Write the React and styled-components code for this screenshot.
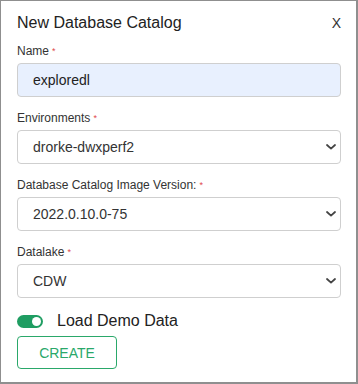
import React, { useState } from 'react';
import styled, { createGlobalStyle } from 'styled-components';

const GlobalStyle = createGlobalStyle`
  html, body { margin: 0; padding: 0; background: #fff; }
  body { font-family: "Liberation Sans", Arial, sans-serif; }
`;

const Dialog = styled.div`
  box-sizing: border-box;
  width: 358px;
  height: 384px;
  background: #fff;
  border-top: 1px solid #8f8f8f;
  border-left: 1px solid #8f8f8f;
  border-right: 2px solid #8f8f8f;
  border-bottom: 2px solid #8f8f8f;
  padding: 12px 15px 0 16px;
  display: flex;
  flex-direction: column;
`;

const Header = styled.div`
  display: flex;
  align-items: center;
  justify-content: space-between;
  height: 20px;
  margin-bottom: 10px;
`;

const Title = styled.div`
  font-size: 16px;
  line-height: 20px;
  color: #222;
`;

const Close = styled.button`
  border: none;
  background: none;
  padding: 0;
  font-family: "Liberation Sans", Arial, sans-serif;
  font-size: 14px;
  line-height: 20px;
  color: #333;
  cursor: pointer;
`;

const Field = styled.div`
  display: flex;
  flex-direction: column;
  margin-bottom: 13px;
`;

const Label = styled.label`
  font-size: 12px;
  line-height: 16px;
  color: #333;
  margin-bottom: 4px;
`;

const Star = styled.span`
  color: #e0474c;
  font-size: 9px;
  vertical-align: top;
  margin-left: 3px;
`;

const Input = styled.input`
  box-sizing: border-box;
  height: 34px;
  width: 100%;
  border: 1px solid #cfcfcf;
  border-radius: 4px;
  background: #e8f0fe;
  padding: 0 15px;
  font-family: "Liberation Sans", Arial, sans-serif;
  font-size: 14px;
  color: #222;
  outline: none;
`;

const SelectWrap = styled.div`
  position: relative;
`;

const Select = styled.select`
  box-sizing: border-box;
  appearance: none;
  height: 34px;
  width: 100%;
  border: 1px solid #cfcfcf;
  border-radius: 4px;
  background: #fff;
  padding: 0 15px;
  font-family: "Liberation Sans", Arial, sans-serif;
  font-size: 14px;
  color: #333;
  outline: none;
`;

const Chevron = styled.svg`
  position: absolute;
  right: 5px;
  top: 14px;
  pointer-events: none;
`;

const ToggleRow = styled.div`
  display: flex;
  align-items: center;
  gap: 14px;
  height: 20px;
`;

const Track = styled.button`
  position: relative;
  width: 26px;
  height: 13px;
  padding: 0;
  border: none;
  border-radius: 7px;
  background: ${p => (p.$on ? '#1f9d62' : '#bbb')};
  cursor: pointer;
`;

const Knob = styled.span`
  position: absolute;
  top: 2px;
  left: ${p => (p.$on ? '15px' : '2px')};
  width: 9px;
  height: 9px;
  border-radius: 50%;
  background: #fff;
`;

const ToggleText = styled.span`
  font-size: 16px;
  color: #222;
`;

const CreateButton = styled.button`
  box-sizing: border-box;
  margin-top: 5px;
  width: 100px;
  height: 33px;
  border: 1px solid #2aa86a;
  border-radius: 4px;
  background: #fff;
  color: #2aa86a;
  font-family: "Liberation Sans", Arial, sans-serif;
  font-size: 14px;
  cursor: pointer;
`;

const ChevronIcon = () => (
  <Chevron width="10" height="6" viewBox="0 0 10 6">
    <path d="M1 1 L5 4.6 L9 1" fill="none" stroke="#444" strokeWidth="1.8" strokeLinecap="round" strokeLinejoin="round" />
  </Chevron>
);

function SelectField({ label, value, options }) {
  return (
    <Field>
      <Label>{label}<Star>*</Star></Label>
      <SelectWrap>
        <Select defaultValue={value}>
          {options.map(o => <option key={o}>{o}</option>)}
        </Select>
        <ChevronIcon />
      </SelectWrap>
    </Field>
  );
}

export default function App() {
  const [name, setName] = useState('exploredl');
  const [demo, setDemo] = useState(true);

  return (
    <>
      <GlobalStyle />
      <Dialog>
        <Header>
          <Title>New Database Catalog</Title>
          <Close>X</Close>
        </Header>
        <Field>
          <Label>Name<Star>*</Star></Label>
          <Input value={name} onChange={e => setName(e.target.value)} />
        </Field>
        <SelectField label="Environments" value="drorke-dwxperf2" options={['drorke-dwxperf2']} />
        <SelectField label="Database Catalog Image Version:" value="2022.0.10.0-75" options={['2022.0.10.0-75']} />
        <SelectField label="Datalake" value="CDW" options={['CDW']} />
        <ToggleRow>
          <Track $on={demo} onClick={() => setDemo(!demo)}><Knob $on={demo} /></Track>
          <ToggleText>Load Demo Data</ToggleText>
        </ToggleRow>
        <CreateButton>CREATE</CreateButton>
      </Dialog>
    </>
  );
}
